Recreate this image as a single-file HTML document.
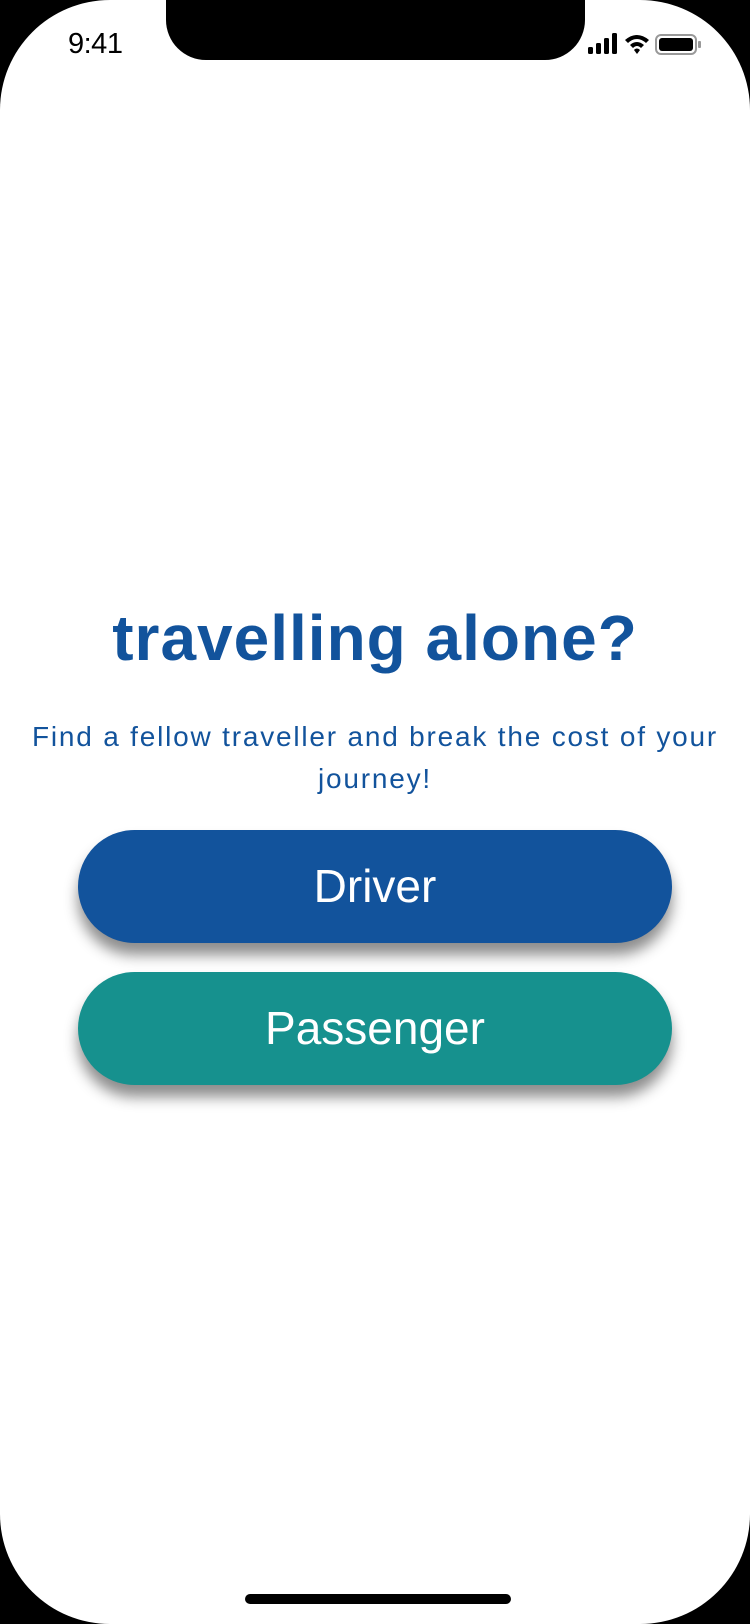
<!DOCTYPE html>
<html><head><meta charset="utf-8"><style>
html,body{margin:0;padding:0;background:#000;}
body{width:750px;height:1624px;position:relative;overflow:hidden;font-family:"Comic Sans MS","Liberation Sans",sans-serif;}
.screen{position:absolute;left:0;top:0;width:750px;height:1624px;background:#fff;border-radius:110px;overflow:hidden;}
.notch{position:absolute;left:166px;top:-2px;width:419px;height:62px;background:#000;border-radius:0 0 40px 40px;}
.time{position:absolute;left:68px;top:28px;font-family:"Liberation Sans",sans-serif;font-size:29px;color:#000;letter-spacing:-0.5px;}
h1{position:absolute;left:0;width:750px;top:598px;margin:0;text-align:center;font-size:64px;font-weight:bold;color:#12539c;letter-spacing:1px;line-height:80px;}
.sub{position:absolute;left:10px;width:730px;top:716px;text-align:center;font-size:28px;line-height:42px;color:#12539c;letter-spacing:1.8px;}
.btn{position:absolute;left:78px;width:594px;height:113px;border-radius:57px;color:#fff;text-align:center;font-size:46px;line-height:113px;box-shadow:0 12px 14px rgba(0,0,0,0.45);}
.home{position:absolute;left:245px;top:1594px;width:266px;height:10px;border-radius:5px;background:#000;}
</style></head><body>
<div class="screen">
<div class="notch"></div>
<div class="time">9:41</div>
<svg style="position:absolute;left:588px;top:33px" width="132" height="24" viewBox="0 0 132 24">
<rect x="0" y="14" width="5" height="7" rx="1.5" fill="#000"/>
<rect x="8" y="10" width="5" height="11" rx="1.5" fill="#000"/>
<rect x="16" y="5" width="5" height="16" rx="1.5" fill="#000"/>
<rect x="24" y="0" width="5" height="21" rx="1.5" fill="#000"/>
<path d="M37 7 Q49 -3 61 7 L58 10 Q49 2 40 10 Z" fill="#000"/>
<path d="M42 12 Q49 6 56 12 L53 15 Q49 11 45 15 Z" fill="#000"/>
<path d="M46 17 Q49 14 52 17 L49 21 Z" fill="#000"/>
<rect x="68" y="2" width="40" height="19" rx="5" fill="none" stroke="#999" stroke-width="2"/>
<rect x="71" y="5" width="34" height="13" rx="3" fill="#000"/>
<rect x="110" y="8" width="3" height="7" rx="1" fill="#999"/>
</svg>
<h1>travelling alone?</h1>
<div class="sub">Find a fellow traveller and break the cost of your journey!</div>
<div class="btn" style="top:830px;background:#12539c;">Driver</div>
<div class="btn" style="top:972px;background:#16918e;">Passenger</div>
<div class="home"></div>
</div>
</body></html>
